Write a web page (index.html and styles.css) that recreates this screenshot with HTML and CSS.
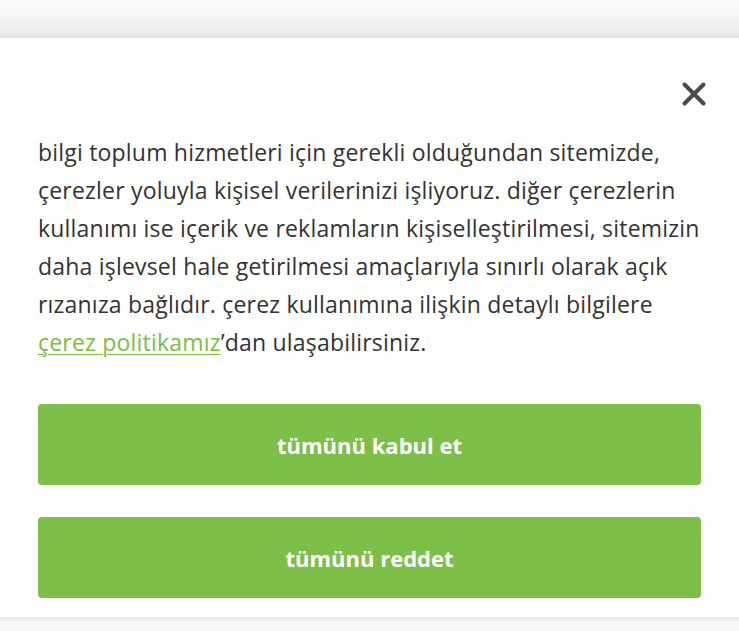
FILE: index.html
```html
<!DOCTYPE html>
<html lang="tr">
<head>
<meta charset="utf-8">
<title>Çerez</title>
<link rel="stylesheet" href="styles.css">
</head>
<body>
<div class="top-band"></div>
<section class="panel">
  <div class="panel-head">
    <button class="close" aria-label="kapat">
      <svg width="26" height="26" viewBox="0 0 26 26"><path d="M3.5 3.5 L22.5 22.5 M22.5 3.5 L3.5 22.5" stroke="#4a4a4a" stroke-width="4" stroke-linecap="round"/></svg>
    </button>
  </div>
  <p class="text">bilgi toplum hizmetleri için gerekli olduğundan sitemizde,<br>çerezler yoluyla kişisel verilerinizi işliyoruz. diğer çerezlerin<br>kullanımı ise içerik ve reklamların kişiselleştirilmesi, sitemizin<br>daha işlevsel hale getirilmesi amaçlarıyla sınırlı olarak açık<br>rızanıza bağlıdır. çerez kullanımına ilişkin detaylı bilgilere<br><a href="#">çerez politikamız</a>’dan ulaşabilirsiniz.</p>
  <div class="actions">
    <button class="btn">tümünü kabul et</button>
    <button class="btn">tümünü reddet</button>
  </div>
</section>
<div class="bottom-band"></div>
</body>
</html>
```
FILE: styles.css
```css
html, body {
  margin: 0;
  padding: 0;
  background: #fff;
}
body {
  width: 739px;
  height: 631px;
  overflow: hidden;
  font-family: "Open Sans", "Noto Sans", sans-serif;
  display: flex;
  flex-direction: column;
}
.top-band {
  height: 38px;
  flex: none;
  background: linear-gradient(to bottom, #fbfbfb 0%, #f6f6f6 40%, #e9e9e9 90%, #e2e2e2 100%);
}
.panel {
  flex: none;
  height: 579px;
  box-sizing: border-box;
  background: #fff;
  padding: 0 38px 0 38px;
  display: flex;
  flex-direction: column;
}
.panel-head {
  display: flex;
  justify-content: flex-end;
  padding-top: 43px;
  margin-right: -6px;
}
.close {
  border: 0;
  background: none;
  padding: 0;
  width: 26px;
  height: 26px;
  display: flex;
}
.text {
  margin: 26px 0 0 0;
  font-size: 23px;
  letter-spacing: 0.2px;
  line-height: 38px;
  color: #333;
  white-space: nowrap;
}
.text a {
  color: #7cbd45;
  text-decoration: underline;
  text-underline-offset: 3px;
  text-decoration-thickness: 1px;
}
.actions {
  margin-top: 43px;
  display: flex;
  flex-direction: column;
  gap: 32px;
}
.btn {
  height: 81px;
  border: 0;
  border-radius: 4px;
  background: #7dbf48;
  color: #fff;
  font-family: "Open Sans", "Noto Sans", sans-serif;
  font-weight: 700;
  font-size: 22px;
}
.bottom-band {
  flex: 1;
  background: linear-gradient(to bottom, #ececec 0%, #f7f7f7 40%, #fafafa 100%);
}
```
